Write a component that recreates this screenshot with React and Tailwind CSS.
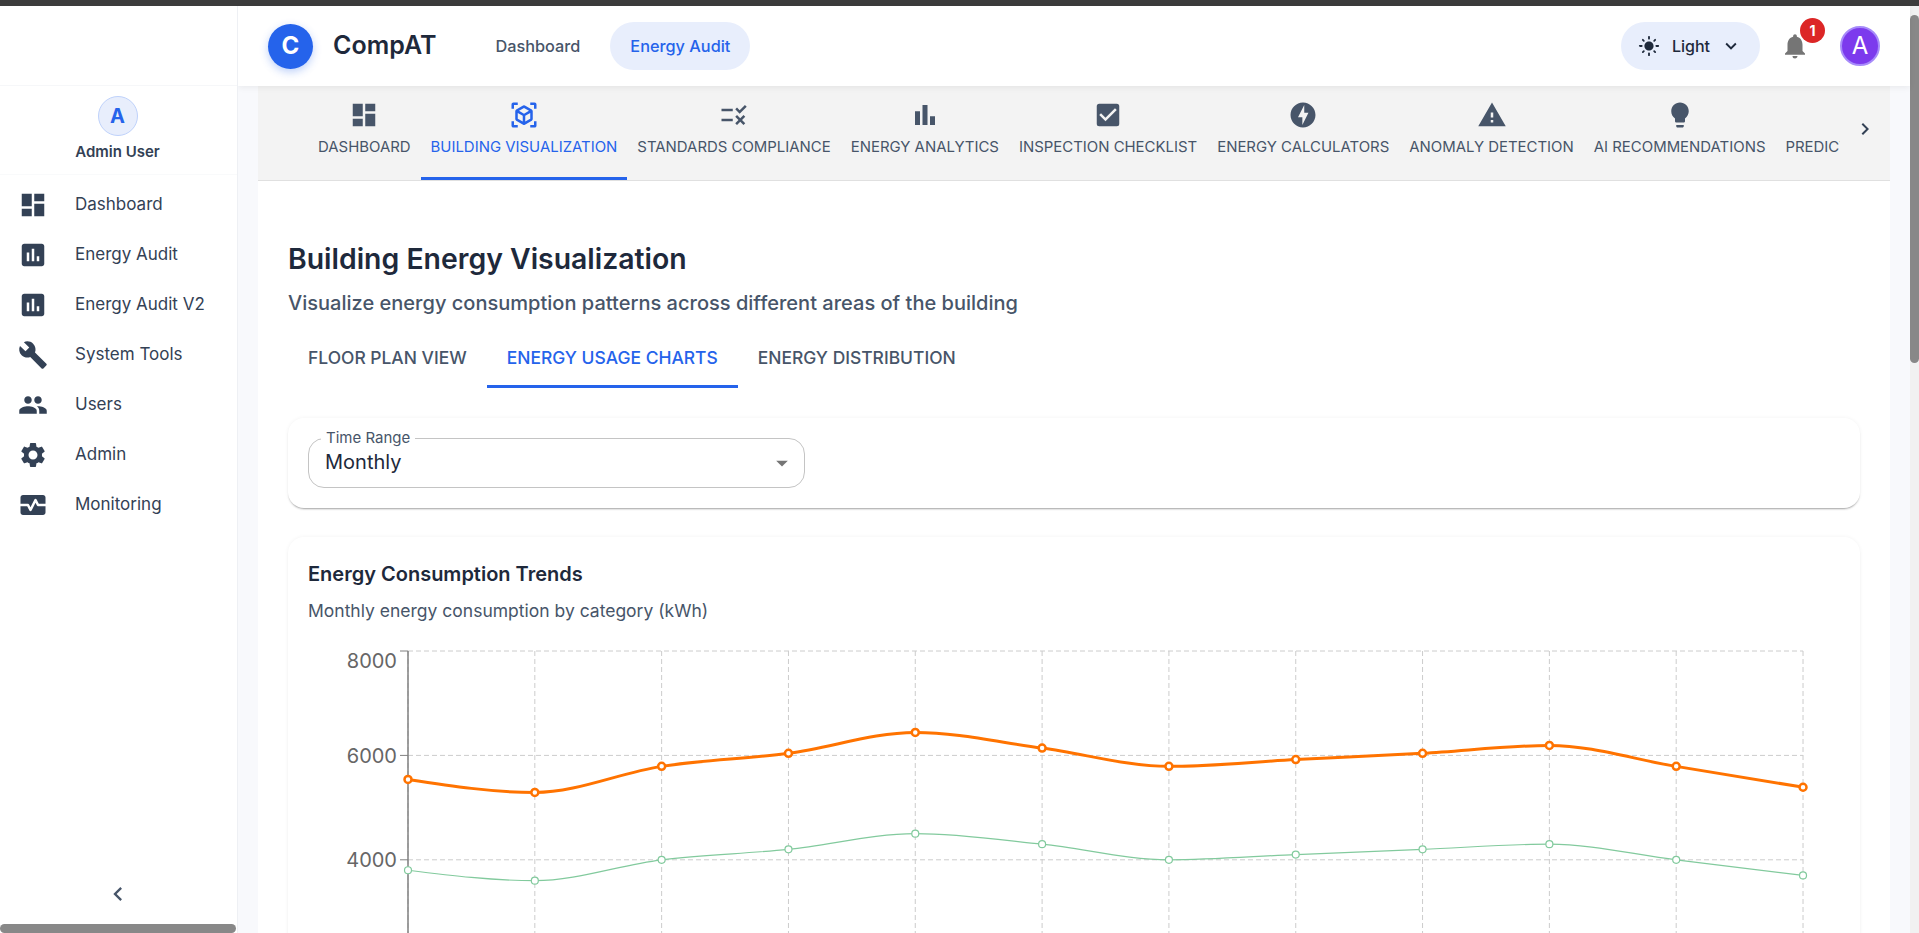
import React from "react";
import {
  MdDashboard, MdAssessment, MdBuild, MdPeople, MdSettings, MdMonitorHeart, MdViewInAr, MdRule, MdBarChart,
  MdCheckBox, MdOfflineBolt, MdWarning, MdLightbulb, MdChevronRight, MdChevronLeft, MdNotifications, MdLightMode,
  MdKeyboardArrowDown, MdArrowDropDown,
} from "react-icons/md";

const nav = [
  ["Dashboard", MdDashboard], ["Energy Audit", MdAssessment], ["Energy Audit V2", MdAssessment],
  ["System Tools", MdBuild], ["Users", MdPeople], ["Admin", MdSettings], ["Monitoring", MdMonitorHeart],
];
const tabs = [
  ["DASHBOARD", MdDashboard], ["BUILDING VISUALIZATION", MdViewInAr], ["STANDARDS COMPLIANCE", MdRule],
  ["ENERGY ANALYTICS", MdBarChart], ["INSPECTION CHECKLIST", MdCheckBox], ["ENERGY CALCULATORS", MdOfflineBolt],
  ["ANOMALY DETECTION", MdWarning], ["AI RECOMMENDATIONS", MdLightbulb], ["PREDICTIVE ANALYTICS", MdBarChart],
];
const orange = [5540, 5290, 5790, 6040, 6440, 6140, 5790, 5920, 6040, 6190, 5790, 5390];
const green = [3800, 3600, 4000, 4200, 4500, 4300, 4000, 4100, 4200, 4300, 4000, 3700];

const X0 = 100, DX = 126.82, TOP = 11, PER = 0.0522;
const px = (i) => X0 + i * DX;
const py = (v) => TOP + (8000 - v) * PER;

function monotone(values) {
  const p = values.map((v, i) => [px(i), py(v)]);
  const n = p.length;
  const s = [];
  for (let i = 0; i < n - 1; i++) s.push((p[i + 1][1] - p[i][1]) / (p[i + 1][0] - p[i][0]));
  const sign = (x) => (x < 0 ? -1 : 1);
  const t = new Array(n);
  for (let i = 1; i < n - 1; i++) {
    const h0 = p[i][0] - p[i - 1][0], h1 = p[i + 1][0] - p[i][0];
    const pp = (s[i - 1] * h1 + s[i] * h0) / (h0 + h1);
    t[i] = (sign(s[i - 1]) + sign(s[i])) * Math.min(Math.abs(s[i - 1]), Math.abs(s[i]), 0.5 * Math.abs(pp)) || 0;
  }
  t[0] = (3 * s[0] - t[1]) / 2;
  t[n - 1] = (3 * s[n - 2] - t[n - 2]) / 2;
  let d = `M${p[0][0]},${p[0][1]}`;
  for (let i = 0; i < n - 1; i++) {
    const dx = (p[i + 1][0] - p[i][0]) / 3;
    d += `C${p[i][0] + dx},${p[i][1] + dx * t[i]} ${p[i + 1][0] - dx},${p[i + 1][1] - dx * t[i + 1]} ${p[i + 1][0]},${p[i + 1][1]}`;
  }
  return d;
}

function Chart() {
  const xs = Array.from({ length: 12 }, (_, i) => px(i));
  return (
    <svg className="block mt-[17px] w-[1534px] h-[400px]" viewBox="0 0 1534 400" fill="none">
      {[8000, 6000, 4000, 2000].map((v) => (
        <line key={v} x1={X0} x2={px(11)} y1={py(v)} y2={py(v)} stroke="#ccc" strokeDasharray="5 3" />
      ))}
      {xs.map((x) => (
        <line key={x} x1={x} x2={x} y1={TOP} y2={400} stroke="#ccc" strokeDasharray="5 3" />
      ))}
      <line x1={X0} x2={X0} y1={TOP} y2={400} stroke="#808080" strokeWidth="1.5" />
      {[8000, 6000, 4000].map((v) => (
        <g key={v}>
          <line x1={X0 - 8} x2={X0} y1={py(v)} y2={py(v)} stroke="#808080" />
          <text x={X0 - 11} y={v === 8000 ? 28 : py(v) + 7.5} textAnchor="end" fontSize="20" fill="#666" fontFamily="Inter, sans-serif">{v}</text>
        </g>
      ))}
      <path d={monotone(green)} stroke="#82ca9d" strokeWidth="1.2" />
      <path d={monotone(orange)} stroke="#ff7300" strokeWidth="3" />
      {green.map((v, i) => <circle key={i} cx={px(i)} cy={py(v)} r="3.5" fill="#fff" stroke="#82ca9d" strokeWidth="1.2" />)}
      {orange.map((v, i) => <circle key={i} cx={px(i)} cy={py(v)} r="3.5" fill="#fff" stroke="#ff7300" strokeWidth="2.5" />)}
    </svg>
  );
}

function Sidebar() {
  return (
    <aside className="w-[238px] shrink-0 flex flex-col border-r border-[#eef0f4] bg-white relative z-20">
      <div className="h-[80px] shrink-0 border-b border-[#f6f7f9]" />
      <div className="h-[89px] shrink-0 flex flex-col items-center pt-[10px] pr-[2px] border-b border-[#f9fafb]">
        <div className="w-[40px] h-[40px] rounded-full bg-[#e8eefc] border border-[#bfd2fb] flex items-center justify-center text-[20px] font-bold text-[#2563eb]">A</div>
        <div className="mt-[6px] text-[15px] leading-[20px] font-semibold text-[#334155]">Admin User</div>
      </div>
      <nav className="flex flex-col pt-[5px]">
        {nav.map(([label, Icon]) => (
          <div key={label} className="h-[50px] flex items-center pl-[18px] gap-[27px]">
            <Icon size={30} className="text-[#334155] shrink-0" />
            <span className="text-[17px] text-[#334155]">{label}</span>
          </div>
        ))}
      </nav>
      <div className="flex-1" />
      <div className="flex justify-center pb-[16px] pr-[2px]">
        <MdChevronLeft size={28} className="text-[#475569]" />
      </div>
      <div className="h-[9px] w-[236px] rounded-[5px] bg-[#888]" />
    </aside>
  );
}

function Header() {
  return (
    <header className="h-[80px] shrink-0 bg-white flex items-center pl-[30px] pr-[30px] shadow-[0_2px_6px_rgba(0,0,0,0.06)] relative z-10">
      <div className="w-[45px] h-[45px] rounded-full bg-[#2563eb] text-white font-bold text-[24px] flex items-center justify-center shadow-[0_3px_8px_rgba(37,99,235,0.3)]">C</div>
      <div className="ml-[20px] text-[25px] font-semibold text-[#1e293b]">CompAT</div>
      <div className="ml-[39px] flex gap-[10px]">
        <div className="h-[48px] px-[20px] flex items-center text-[16.3px] font-medium text-[#475569]">Dashboard</div>
        <div className="h-[48px] px-[20px] flex items-center text-[16.3px] font-medium text-[#2563eb] bg-[#e8eefc] rounded-[24px]">Energy Audit</div>
      </div>
      <div className="flex-1" />
      <div className="h-[48px] w-[139px] pl-[17px] flex items-center bg-[#e8eefc] rounded-[24px]">
        <MdLightMode size={22} className="text-[#1e293b]" />
        <span className="ml-[12px] text-[16px] font-medium text-[#1e293b]">Light</span>
        <MdKeyboardArrowDown size={22} className="ml-[10px] text-[#1e293b]" />
      </div>
      <div className="ml-[20px] relative w-[30px] h-[30px]">
        <MdNotifications size={30} className="text-[#757575]" />
        <span className="absolute -top-[13px] left-[20px] w-[25px] h-[25px] rounded-full bg-[#dc2626] text-white text-[14px] font-bold flex items-center justify-center">1</span>
      </div>
      <div className="ml-[30px] w-[40px] h-[40px] rounded-full bg-[#7c3aed] border-2 border-[#a78bfa] text-white text-[24px] flex items-center justify-center">A</div>
    </header>
  );
}

function TabBar() {
  return (
    <div className="h-[95px] shrink-0 bg-[#f3f3f3] border-b border-[#e0e0e0] flex">
      <div className="w-[50px] shrink-0" />
      <div className="flex-1 overflow-hidden flex">
        {tabs.map(([label, Icon], i) => (
          <div key={label} className={`shrink-0 h-[94px] px-[10px] pt-[14px] flex flex-col items-center border-b-[3px] ${i === 1 ? "border-[#2563eb] text-[#2563eb]" : "border-transparent text-[#475569]"}`}>
            <Icon size={30} />
            <span className="mt-[7px] text-[14.93px] leading-[20px] whitespace-nowrap">{label}</span>
          </div>
        ))}
      </div>
      <div className="w-[50px] shrink-0 flex justify-center pt-[31px]">
        <MdChevronRight size={24} className="text-[#334155]" />
      </div>
    </div>
  );
}

function Content() {
  return (
    <div className="flex-1 min-h-0 overflow-hidden px-[30px] pt-[60px]">
      <h1 className="text-[28.4px] leading-[36px] font-semibold text-[#1e293b]">Building Energy Visualization</h1>
      <p className="mt-[12px] text-[20.05px] leading-[28px] font-medium text-[#475569]">Visualize energy consumption patterns across different areas of the building</p>
      <div className="mt-[16px] flex h-[55px]">
        {["FLOOR PLAN VIEW", "ENERGY USAGE CHARTS", "ENERGY DISTRIBUTION"].map((t, i) => (
          <div key={t} className={`px-[20px] pb-[2px] flex items-center border-b-[3px] text-[17.45px] font-medium ${i === 1 ? "border-[#2563eb] text-[#2563eb]" : "border-transparent text-[#475569]"}`}>{t}</div>
        ))}
      </div>
      <div className="mt-[30px] h-[90px] rounded-[16px] bg-white p-[20px] shadow-[0_2px_2px_-1px_rgba(0,0,0,0.35),0_0_4px_rgba(0,0,0,0.05)]">
        <div className="relative w-[497px] h-[50px] rounded-[16px] border border-[#c4c4c4] pl-[17px] flex items-center pr-[8px]">
          <span className="absolute left-[12px] -top-[10px] bg-white px-[5px] text-[15px] leading-[18px] text-[#475569]">Time Range</span>
          <span className="flex-1 -ml-[1px] text-[20px] text-[#1e293b] pb-[3px]">Monthly</span>
          <MdArrowDropDown size={28} className="text-[#757575]" />
        </div>
      </div>
      <div className="mt-[29px] rounded-[16px] bg-white p-[20px] shadow-[0_2px_2px_-1px_rgba(0,0,0,0.2),0_0_4px_rgba(0,0,0,0.05)]">
        <h2 className="text-[20px] leading-[34px] font-semibold text-[#1e293b]">Energy Consumption Trends</h2>
        <p className="mt-[8px] text-[17.5px] leading-[24px] text-[#475569]">Monthly energy consumption by category (kWh)</p>
        <Chart />
      </div>
    </div>
  );
}

export default function App() {
  return (
    <div className="h-[933px] w-full overflow-hidden flex flex-col bg-white font-[Inter,sans-serif]">
      <div className="h-[6px] shrink-0 bg-[#3c3c3c]" />
      <div className="flex-1 min-h-0 flex">
        <Sidebar />
        <div className="flex-1 min-w-0 flex flex-col">
          <Header />
          <div className="flex-1 min-h-0 bg-[#f8f9fc] px-[20px]">
            <div className="h-full bg-white flex flex-col">
              <TabBar />
              <Content />
            </div>
          </div>
        </div>
        <div className="w-[9px] shrink-0 bg-[#f1f1f1] pt-[9px]">
          <div className="h-[348px] rounded-[5px] bg-[#888]" />
        </div>
      </div>
    </div>
  );
}
